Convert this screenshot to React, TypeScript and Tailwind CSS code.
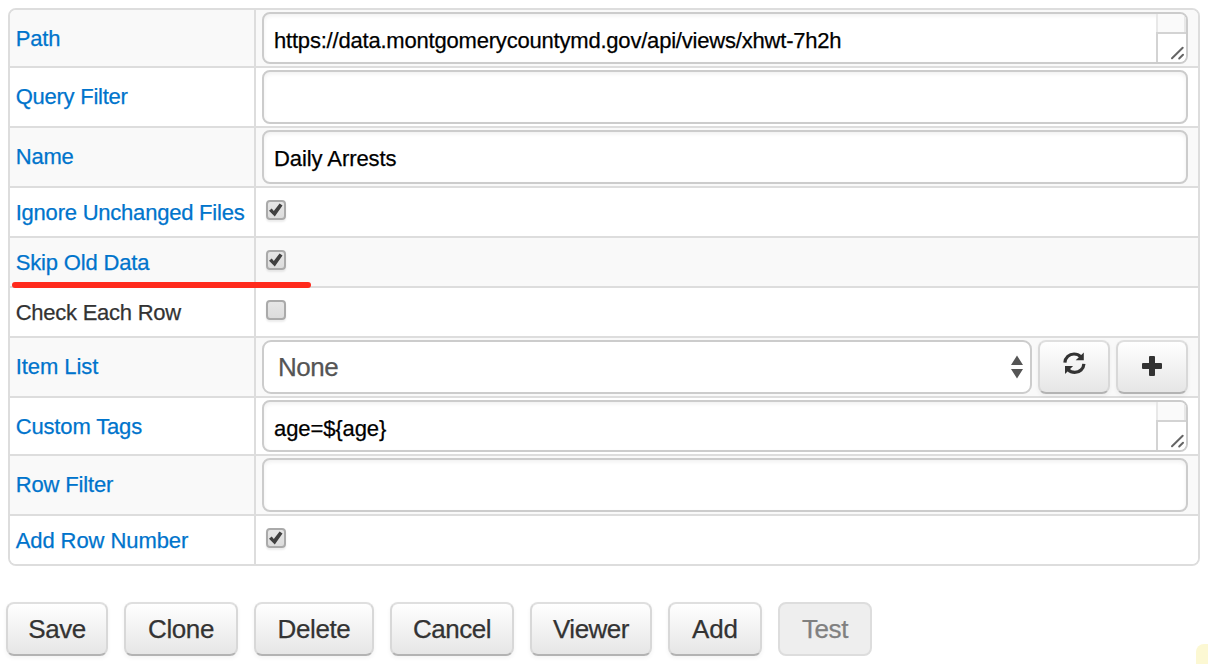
import React from "react";

const label = "w-[246px] shrink-0 border-r-2 border-[#dddddd] pl-[5.7px] text-[22px] leading-[36px] whitespace-nowrap";
const frame = "w-[926px] rounded-[8px] border-2 border-[#cccccc] bg-white shadow-[inset_0_2px_4px_rgba(0,0,0,0.06)]";
const fieldText = "pt-[9px] pl-[10px] text-[22px] leading-[36px] text-black";

function Row({
  name,
  height,
  striped,
  pad,
  first,
  track,
  muted,
  children,
}: {
  name: string;
  height: string;
  striped?: boolean;
  pad: string;
  first?: boolean;
  track: string;
  muted?: boolean;
  children: React.ReactNode;
}) {
  return (
    <div className={`flex ${height} ${striped ? "bg-[#f9f9f9]" : "bg-white"} ${first ? "" : "border-t-2 border-[#dddddd]"}`}>
      <div className={`${label} ${pad} ${muted ? "text-[#333333]" : "text-[#0074cc]"} ${track}`}>{name}</div>
      <div className="flex flex-1 items-start pt-[2px] pl-[6px]">{children}</div>
    </div>
  );
}

function TextArea({ value, track }: { value: string; track: string }) {
  return (
    <div className={`flex h-[52px] overflow-hidden ${frame}`}>
      <div className={`flex-1 ${fieldText} ${track}`}>{value}</div>
      <div className="flex w-[30px] flex-col">
        <div className="h-[18px] border-r-2 border-l-2 border-[#e8e8e8] bg-[#fafafa]" />
        <div className="h-[30px] border-t-2 border-l-2 border-[#d3d3d3] bg-white">
          <svg width="28" height="28" viewBox="0 0 28 28" className="block">
            <path d="M14 24.300 24.700 13.800M21.200 24.500 25 20.800" stroke="#666" strokeWidth="2" strokeLinecap="round" fill="none" />
          </svg>
        </div>
      </div>
    </div>
  );
}

function Input({ value = "" }: { value?: string }) {
  return <div className={`h-[54px] ${frame} ${fieldText} tracking-[-0.08px]`}>{value}</div>;
}

function Check({ checked }: { checked?: boolean }) {
  return (
    <div className="mt-[10px] ml-[4px] h-5 w-5 rounded-[4px] border-2 border-[#aaaaaa] bg-linear-to-b from-[#e6e6e6] to-[#dcdcdc] shadow-[0_2px_2px_rgba(0,0,0,0.08)]">
      {checked && (
        <svg width="16" height="16" viewBox="0 0 16 16" className="block">
          <path d="M1 8.700 3.700 6.600 5.800 8.900 11.600 1.400 14.500 3.400 6.800 14.400Z" fill="#404040" />
        </svg>
      )}
    </div>
  );
}

const raised =
  "rounded-[8px] border-2 border-t-[#dfdfdf] border-x-[#d8d8d8] border-b-[#b3b3b3] bg-linear-to-b from-white to-[#e6e6e6] shadow-[0_2px_4px_rgba(0,0,0,0.05)]";

function IconButton({ children }: { children: React.ReactNode }) {
  return <div className={`${raised} h-[54px] w-[72px]`}>{children}</div>;
}

function Button({ text, width, track = "", disabled }: { text: string; width: string; track?: string; disabled?: boolean }) {
  return (
    <button
      className={`flex h-[54px] ${width} ${track} justify-center pt-[5px] text-[26px] leading-[40px] ${
        disabled ? "rounded-[8px] border-2 border-[#dddddd] bg-[#eeeeee] text-[#808080]" : `${raised} text-[#333333]`
      }`}
    >
      {text}
    </button>
  );
}

export default function App() {
  return (
    <div className="relative h-[664px] w-[1208px] overflow-hidden bg-white pt-[8px] pl-[6px] font-['Liberation_Sans',Arial,sans-serif] [-webkit-text-stroke:0.25px_currentColor]">
      <div className="ml-[2px] h-[558px] w-[1192px] overflow-hidden rounded-[8px] border-2 border-[#dddddd]">
        <Row name="Path" height="h-[56px]" pad="pt-[11px]" track="tracking-[-0.15px]" striped first>
          <TextArea value="https://data.montgomerycountymd.gov/api/views/xhwt-7h2h" track="tracking-[-0.2px]" />
        </Row>
        <Row name="Query Filter" height="h-[60px]" pad="pt-[11px]" track="tracking-[-0.25px]">
          <Input />
        </Row>
        <Row name="Name" height="h-[60px]" pad="pt-[11px]" track="tracking-[-0.2px]" striped>
          <Input value="Daily Arrests" />
        </Row>
        <Row name="Ignore Unchanged Files" height="h-[50px]" pad="pt-[7px]" track="tracking-[-0.22px]">
          <Check checked />
        </Row>
        <Row name="Skip Old Data" height="h-[50px]" pad="pt-[7px]" track="tracking-[-0.17px]" striped>
          <Check checked />
        </Row>
        <Row name="Check Each Row" height="h-[50px]" pad="pt-[7px]" track="tracking-[-0.25px]" muted>
          <Check />
        </Row>
        <Row name="Item List" height="h-[60px]" pad="pt-[11px]" track="tracking-[-0.07px]" striped>
          <div className="flex gap-[6px]">
            <div className="flex h-[54px] w-[770px] justify-between rounded-[9px] border-2 border-[#cccccc] bg-white pr-[7px] pl-[14px]">
              <span className="pt-[5px] text-[26px] leading-[40px] tracking-[-0.5px] text-[#555555]">None</span>
              <svg width="12" height="24" viewBox="0 0 12 24" className="mt-[13px]">
                <path d="M6 0.500 12 10H0ZM0 14H12L6 23.500Z" fill="#555" />
              </svg>
            </div>
            <IconButton>
              <svg width="23" height="23" viewBox="0 0 23 23" className="mt-[10px] ml-[23px]">
                <path
                  d="M1.900 10.600C2.200 5.600 6.200 2 11 2C13.800 2 16 3 17.700 4.800M20.900 11.800C20.600 16.800 16.600 20.400 11.800 20.400C9 20.400 6.800 19.400 5.100 17.600"
                  fill="none"
                  stroke="#333"
                  strokeWidth="3.200"
                />
                <path d="M20.800 0.400V8.300H12.700ZM2 22V14.100H10.100Z" fill="#333" />
              </svg>
            </IconButton>
            <IconButton>
              <svg width="20" height="20" viewBox="0 0 20 20" className="mt-[14px] ml-[24px]">
                <path d="M7 1q0-1 1-1H12q1 0 1 1V7H19q1 0 1 1V12q0 1-1 1H13V19q0 1-1 1H8q-1 0-1-1V13H1q-1 0-1-1V8q0-1 1-1H7Z" fill="#333" />
              </svg>
            </IconButton>
          </div>
        </Row>
        <Row name="Custom Tags" height="h-[58px]" pad="pt-[11px]" track="tracking-[-0.15px]">
          <TextArea value="age=${age}" track="tracking-[-0.1px]" />
        </Row>
        <Row name="Row Filter" height="h-[60px]" pad="pt-[11px]" track="tracking-[-0.15px]" striped>
          <Input />
        </Row>
        <Row name="Add Row Number" height="h-[50px]" pad="pt-[7px]" track="tracking-[-0.08px]">
          <Check checked />
        </Row>
      </div>
      <div className="mt-[36px] flex gap-[16px]">
        <Button text="Save" width="w-[102px]" track="tracking-[-0.5px]" />
        <Button text="Clone" width="w-[114px]" track="tracking-[-0.4px]" />
        <Button text="Delete" width="w-[120px]" track="tracking-[-0.4px]" />
        <Button text="Cancel" width="w-[124px]" track="tracking-[-0.5px]" />
        <Button text="Viewer" width="w-[122px]" track="tracking-[-0.5px]" />
        <Button text="Add" width="w-[94px]" track="tracking-[-0.1px]" />
        <Button text="Test" width="w-[94px]" track="tracking-[-0.4px]" disabled />
      </div>
      <div className="absolute top-[282px] left-[12px] h-[6px] w-[299px] rounded-full bg-[#ff2a1c]" />
      <div className="absolute right-0 bottom-0 h-[20px] w-[12px] rounded-tl-[8px] bg-[#fcf8d3]" />
    </div>
  );
}
